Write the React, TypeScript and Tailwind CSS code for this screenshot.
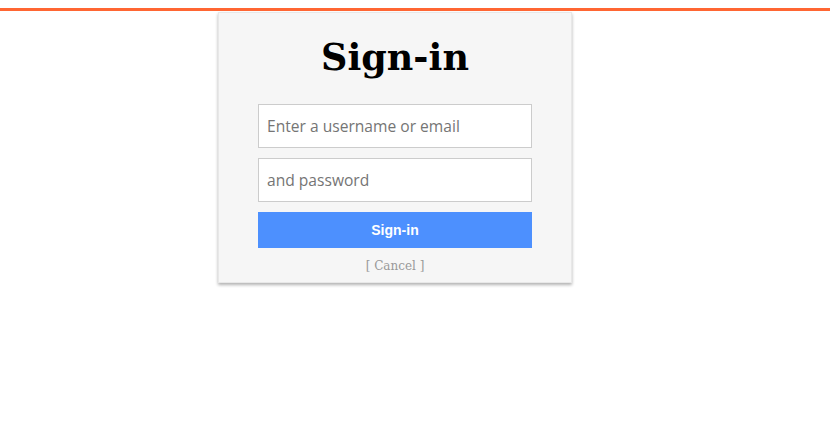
import React from "react";

export default function App() {
  return (
    <div className="w-[830px] h-[442px] bg-white">
      <div className="pt-[8px]">
        <div className="h-[3px] bg-[#ff6633]" />
      </div>
      <div className="ml-[218px] mt-[1px] w-[354px] bg-[#f6f6f6] border border-[#e8e8e8] shadow-[0_2px_3px_rgba(0,0,0,0.3)] pt-[23px] pb-[7px] flex flex-col items-center">
        <h1 className="text-[36.5px] leading-[44px] font-bold text-black" style={{ fontFamily: '"DejaVu Serif", serif' }}>
          Sign-in
        </h1>
        <div className="mt-[24px] w-[274px] flex flex-col gap-[10px]">
          <input
            placeholder="Enter a username or email"
            className="h-[44px] w-full bg-white border border-[#cccccc] px-[8px] text-[15.6px] placeholder:text-[#757575] outline-none"
            style={{ fontFamily: '"Open Sans", sans-serif' }}
          />
          <input
            placeholder="and password"
            type="password"
            className="h-[44px] w-full bg-white border border-[#cccccc] px-[8px] text-[15.6px] placeholder:text-[#757575] outline-none"
            style={{ fontFamily: '"Open Sans", sans-serif' }}
          />
          <button
            className="h-[36px] w-full bg-[#4d90fe] text-white text-[14px] font-bold"
            style={{ fontFamily: '"Liberation Sans", Arial, sans-serif' }}
          >
            Sign-in
          </button>
        </div>
        <div className="mt-[9px] text-[12px] leading-[18px] text-[#999999]" style={{ fontFamily: '"DejaVu Serif", serif' }}>
          [ Cancel ]
        </div>
      </div>
    </div>
  );
}
